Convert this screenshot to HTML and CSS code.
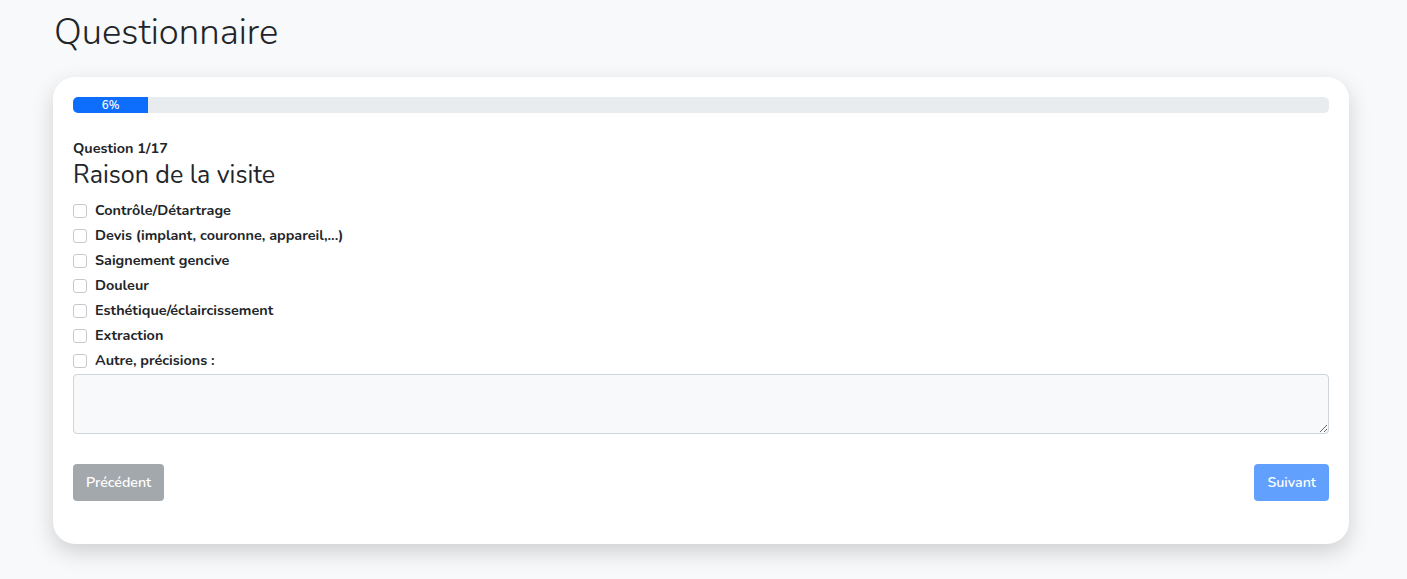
FILE: index.html
```html
<!DOCTYPE html>
<html lang="fr">
<head>
    <meta charset="UTF-8">
    <meta name="viewport" content="width=device-width, initial-scale=1.0">
    <title>Questionnaire</title>
    <link rel="stylesheet" href="styles.css">
</head>
<body>
    <div class="page">
        <h1 class="title">Questionnaire</h1>

        <div class="card">
            <div class="progress">
                <div class="progress-bar" style="width: 6%;">6%</div>
            </div>

            <div class="question">
                <p class="question-num">Question 1/17</p>
                <h2 class="question-title">Raison de la visite</h2>

                <label class="option"><input type="checkbox"> Contrôle/Détartrage</label>
                <label class="option"><input type="checkbox"> Devis (implant, couronne, appareil,...)</label>
                <label class="option"><input type="checkbox"> Saignement gencive</label>
                <label class="option"><input type="checkbox"> Douleur</label>
                <label class="option"><input type="checkbox"> Esthétique/éclaircissement</label>
                <label class="option"><input type="checkbox"> Extraction</label>
                <label class="option"><input type="checkbox"> Autre, précisions :</label>
                <textarea class="details"></textarea>
            </div>

            <div class="actions">
                <button class="btn btn-prev" disabled>Précédent</button>
                <button class="btn btn-next" disabled>Suivant</button>
            </div>
        </div>
    </div>
</body>
</html>
```

FILE: styles.css
```css
body {
    margin: 0;
    font-family: 'Nunito', 'Lato', sans-serif;
    background-color: #f8f9fa;
    color: #212529;
}
.page {
    padding: 0 58px 40px 53px;
}
.title {
    font-size: 36.5px;
    font-weight: 300;
    margin: 0;
    padding: 10px 0 0 1px;
    line-height: 44px;
}
.card {
    margin-top: 23px;
    background: #fff;
    border-radius: 22px;
    box-shadow: 0 8px 22px rgba(0, 0, 0, 0.17);
    padding: 20px 20px 43px;
}
.progress {
    height: 16px;
    background: #e9ecef;
    border-radius: 5px;
    overflow: hidden;
}
.progress-bar {
    height: 100%;
    background: #0d6efd;
    color: #fff;
    font-size: 11.5px;
    font-weight: 600;
    line-height: 16px;
    text-align: center;
}
.question {
    margin-top: 27px;
}
.question-num {
    margin: 0;
    font-size: 14.4px;
    font-weight: 700;
    line-height: 17px;
}
.question-title {
    margin: 0 0 5px;
    font-size: 25px;
    font-weight: 400;
    line-height: 36px;
}
.option {
    display: flex;
    align-items: center;
    gap: 8px;
    font-size: 14.4px;
    font-weight: 700;
    line-height: 25px;
}
.option input {
    appearance: none;
    width: 14px;
    height: 14px;
    margin: 0;
    border: 1px solid #c4c9ce;
    border-radius: 3px;
    background: #fff;
}
.details {
    display: block;
    box-sizing: border-box;
    width: 100%;
    height: 60px;
    margin-top: 1px;
    background: #f8f9fa;
    border: 1px solid #ced4da;
    border-radius: 4px;
}
.actions {
    display: flex;
    justify-content: space-between;
    margin-top: 30px;
}
.btn {
    font-family: inherit;
    font-size: 14.2px;
    font-weight: 600;
    height: 37px;
    padding: 0 13px;
    border: none;
    border-radius: 4px;
    color: #fff;
}
.btn-prev { background: #a3a8ad; }
.btn-next { background: #62a0fe; }
```
